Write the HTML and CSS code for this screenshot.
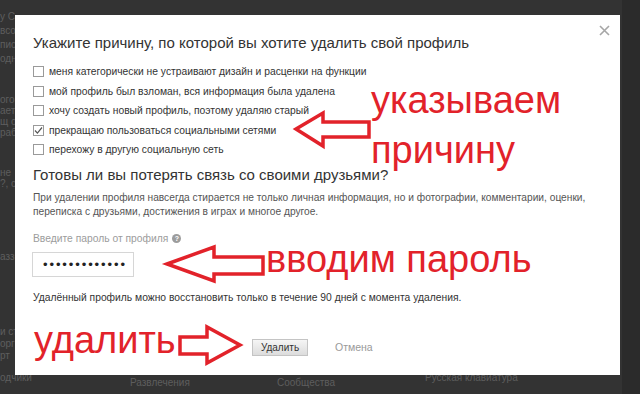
FILE: index.html
```html
<!DOCTYPE html>
<html>
<head>
    <meta charset="utf-8">
    <title>Удаление профиля</title>
    <link rel="stylesheet" href="styles.css">
</head>
<body>
    <div class="page">
        <div class="sidebar">
            <div class="side-block side-first">
                <p>у С</p>
                <p>всо</p>
                <p>пис</p>
                <p>одн</p>
            </div>
            <div class="side-block side-second">
                <p>ого</p>
                <p>ает</p>
                <p>щ о</p>
                <p>раб</p>
            </div>
            <div class="side-block side-third">
                <p>не</p>
                <p>?, с</p>
            </div>
            <div class="side-block side-fourth">
                <p>азз</p>
            </div>
            <div class="side-block side-fifth">
                <p>и ст</p>
                <p>орг</p>
                <p>рт</p>
            </div>
        </div>
        <div class="footer">
            <div class="footer-col footer-low">одчики</div>
            <div class="footer-col">Развлечения</div>
            <div class="footer-col">Сообщества</div>
            <div class="footer-col footer-low">Русская клавиатура</div>
        </div>
    </div>

    <div class="modal">
        <div class="modal-close">
            <svg width="11" height="11" viewBox="0 0 11 11" fill="none" stroke="currentColor" stroke-width="1.6">
                <path d="M1 1l9 9M10 1l-9 9"/>
            </svg>
        </div>

        <h1 class="modal-title">Укажите причину, по которой вы хотите удалить свой профиль</h1>

        <ul class="reasons">
            <li><span class="checkbox"></span>меня категорически не устраивают дизайн и расценки на функции</li>
            <li><span class="checkbox"></span>мой профиль был взломан, вся информация была удалена</li>
            <li><span class="checkbox"></span>хочу создать новый профиль, поэтому удаляю старый</li>
            <li>
                <span class="checkbox">
                    <svg width="9" height="9" viewBox="0 0 9 9" fill="none" stroke="currentColor" stroke-width="1.2">
                        <path d="M1 4.5l2.4 2.6L8 1.5"/>
                    </svg>
                </span>прекращаю пользоваться социальными сетями
            </li>
            <li><span class="checkbox"></span>перехожу в другую социальную сеть</li>
        </ul>

        <h2 class="modal-subtitle">Готовы ли вы потерять связь со своими друзьями?</h2>
        <p class="modal-text">При удалении профиля навсегда стирается не только личная информация, но и фотографии, комментарии, оценки,<br>переписка с друзьями, достижения в играх и многое другое.</p>

        <div class="field-label">Введите пароль от профиля <span class="help">?</span></div>
        <div class="password">•••••••••••••</div>

        <p class="modal-note">Удалённый профиль можно восстановить только в течение 90 дней с момента удаления.</p>

        <div class="modal-actions">
            <button class="btn-delete">Удалить</button>
            <a class="btn-cancel">Отмена</a>
        </div>
    </div>

    <div class="notes">
        <svg class="arrows" width="640" height="394" viewBox="0 0 640 394" fill="none">
            <polygon points="296,129 323,113 323,122 369,122 369,137 323,137 323,146"/>
            <polygon points="167,264 214,247 214,257 263,257 263,274 214,274 214,281"/>
            <polygon points="180,337 207,337 207,327 240,345 207,363 207,354 180,354"/>
        </svg>
        <div class="note note-reason">указываем<br>причину</div>
        <div class="note note-password">вводим пароль</div>
        <div class="note note-delete">удалить</div>
    </div>
</body>
</html>
```

FILE: styles.css
```css
* {
    box-sizing: border-box;
}

body {
    margin: 0;
    width: 640px;
    height: 394px;
    overflow: hidden;
    background: #2b2b2b;
    font-family: 'Liberation Sans', Arial, sans-serif;
}

/* dimmed page under the dialog */
.page {
    width: 622px;
    height: 394px;
    background: #333333;
    color: #5e5e5e;
    font-size: 10px;
    overflow: hidden;
}

.sidebar {
    height: 370px;
    padding-top: 10px;
    white-space: nowrap;
}

.side-block p {
    margin: 0;
    line-height: 11px;
}

.side-first p {
    line-height: 14px;
}

.side-second {
    margin-top: 28px;
}

.side-third {
    margin-top: 29px;
}

.side-fourth {
    margin-top: 62px;
}

.side-fifth {
    margin-top: 64px;
}

.side-fifth p {
    line-height: 12px;
}

.footer {
    display: grid;
    grid-template-columns: 130px 147px 148px 1fr;
    line-height: 12px;
    white-space: nowrap;
}

.footer-col {
    padding-top: 7px;
}

.footer-col.footer-low {
    padding-top: 2px;
}

/* dialog */
.modal {
    position: absolute;
    left: 15px;
    top: 15px;
    width: 605px;
    height: 360px;
    background: #ffffff;
    padding: 18px 18px 0 18px;
    color: #333333;
}

.modal-close {
    position: absolute;
    top: 10px;
    right: 10px;
    color: #a6a6a6;
    display: flex;
}

.modal-title {
    margin: 0;
    font-size: 15px;
    font-weight: normal;
    line-height: 20px;
    white-space: nowrap;
}

.reasons {
    list-style: none;
    margin: 9px 0 0;
    padding: 0;
}

.reasons li {
    display: flex;
    align-items: center;
    gap: 5px;
    height: 19.5px;
    font-size: 10.3px;
    white-space: nowrap;
}

.checkbox {
    width: 11px;
    height: 11px;
    border: 1px solid #9a9a9a;
    background: #ffffff;
    color: #555555;
    display: flex;
    align-items: center;
    justify-content: center;
    flex-shrink: 0;
}

.modal-subtitle {
    margin: 5px 0 0;
    font-size: 15px;
    font-weight: normal;
    line-height: 20px;
    white-space: nowrap;
}

.modal-text {
    margin: 6px 0 0;
    font-size: 10.2px;
    line-height: 14px;
    color: #555555;
    white-space: nowrap;
}

.field-label {
    margin-top: 13px;
    font-size: 10.3px;
    line-height: 14px;
    color: #9c9c9c;
    display: flex;
    align-items: center;
    gap: 4px;
}

.help {
    width: 9px;
    height: 9px;
    border-radius: 50%;
    background: #9c9c9c;
    color: #ffffff;
    font-size: 7px;
    font-weight: bold;
    line-height: 9px;
    text-align: center;
}

.password {
    margin: 6px 0 0 -1px;
    width: 102px;
    height: 25px;
    border: 1px solid #d6d6d6;
    background: #ffffff;
    padding-left: 10px;
    font-size: 13px;
    line-height: 23px;
    letter-spacing: 1.9px;
    color: #222222;
}

.modal-note {
    margin: 14px 0 0;
    font-size: 10.3px;
    line-height: 14px;
    white-space: nowrap;
}

.modal-actions {
    margin-top: 34px;
    display: flex;
    align-items: center;
}

.btn-delete {
    margin-left: 219px;
    width: 56px;
    height: 17px;
    padding: 0;
    border: 1px solid #c4c4c4;
    background: linear-gradient(#f5f5f5, #dcdcdc);
    font-family: inherit;
    font-size: 10px;
    color: #333333;
}

.btn-cancel {
    margin-left: 27px;
    font-size: 10.5px;
    color: #9a9a9a;
}

/* red hand-made notes on top */
.notes {
    position: absolute;
    left: 0;
    top: 0;
    width: 640px;
    height: 394px;
    color: #e2222a;
}

.arrows {
    position: absolute;
    left: 0;
    top: 0;
    stroke: #e2222a;
    stroke-width: 3.5;
}

.note {
    position: absolute;
    font-size: 38px;
    line-height: 38px;
    white-space: nowrap;
}

.note-reason {
    left: 371px;
    top: 81px;
    line-height: 50px;
    margin-top: -6px;
}

.note-password {
    left: 266px;
    top: 240px;
}

.note-delete {
    left: 34px;
    top: 321px;
}
```
